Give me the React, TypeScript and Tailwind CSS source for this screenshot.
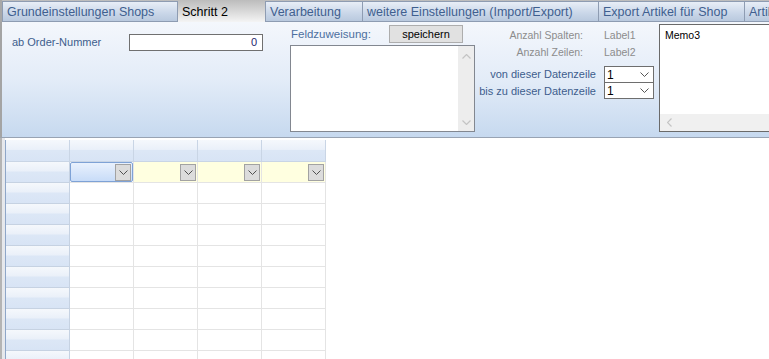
import React from "react";

const Chevron = ({ color = "#4a4a4a" }: { color?: string }) => (
  <svg width="9" height="5" viewBox="0 0 9 5" className="block">
    <polyline points="0.5,0.5 4.5,4.5 8.5,0.5" fill="none" stroke={color} strokeWidth="1" />
  </svg>
);

const ChevronUp = ({ color = "#c4c4c4" }: { color?: string }) => (
  <svg width="9" height="5" viewBox="0 0 9 5" className="block">
    <polyline points="0.5,4.5 4.5,0.5 8.5,4.5" fill="none" stroke={color} strokeWidth="1.2" />
  </svg>
);

const ChevronDown = ({ color = "#c4c4c4" }: { color?: string }) => (
  <svg width="9" height="5" viewBox="0 0 9 5" className="block">
    <polyline points="0.5,0.5 4.5,4.5 8.5,0.5" fill="none" stroke={color} strokeWidth="1.2" />
  </svg>
);

const ChevronLeft = ({ color = "#c4c4c4" }: { color?: string }) => (
  <svg width="5" height="9" viewBox="0 0 5 9" className="block">
    <polyline points="4.5,0.5 0.5,4.5 4.5,8.5" fill="none" stroke={color} strokeWidth="1.2" />
  </svg>
);

function Tab({ w, children, first }: { w: string; children: React.ReactNode; first?: boolean }) {
  return (
    <div
      className={`${w} mt-[1px] h-[21px] border-l border-t border-b border-[#8e9cb2] ${first ? "border-r" : ""} bg-[linear-gradient(#e8eef7,#c9d6e8_60%,#b9c9de)] text-[#3f5f8f] text-[12.5px] leading-none pl-[4px] pt-[4px] whitespace-nowrap overflow-hidden shrink-0`}
    >
      {children}
    </div>
  );
}

const DropBtn = () => (
  <div className="w-[16px] h-[17px] bg-[#dcdcdc] border border-[#a2a2a2] flex items-center justify-center">
    <Chevron color="#505050" />
  </div>
);

export default function App() {
  const rows = Array.from({ length: 9 });
  const hdrBg =
    "bg-[linear-gradient(#f5f8fc,#eaf0f9_45%,#dce7f6_50%,#d8e4f5)]";
  return (
    <div className="w-[769px] h-[359px] overflow-hidden bg-white font-['Liberation_Sans',Arial,sans-serif]">
      {/* Tabs */}
      <div className="flex h-[22px] bg-[linear-gradient(#bcbcbc,#f4f4f4)]">
        <div className="w-[2px] shrink-0 bg-[#a8a8a8]" />
        <Tab w="w-[176px]" first>
          Grundeinstellungen Shops
        </Tab>
        <div className="w-[87px] shrink-0 h-[22px] text-black text-[12.5px] leading-none pl-[4px] pt-[6px] whitespace-nowrap">
          Schritt 2
        </div>
        <Tab w="w-[97px]">Verarbeitung</Tab>
        <Tab w="w-[236px]">weitere Einstellungen (Import/Export)</Tab>
        <Tab w="w-[146px]">Export Artikel für Shop</Tab>
        <Tab w="w-[60px]">Artikel</Tab>
      </div>

      {/* Top panel */}
      <div className="flex items-start h-[116px] border-l-2 border-b border-l-[#a4a4a4] border-b-[#98a3b3] bg-[linear-gradient(#f4f7fc,#e3ecf8_50%,#c6d9ef)]">
        {/* Order-Nummer */}
        <div className="flex items-center ml-[10px] mt-[12px] shrink-0">
          <div className="w-[117px] text-[11px] text-[#3d5d8d] leading-none">ab Order-Nummer</div>
          <div className="w-[134px] h-[17px] bg-white border border-[#707070] text-right pr-[5px] text-[11px] leading-[15px] text-[#1e1e6e]">
            0
          </div>
        </div>

        {/* Feldzuweisung */}
        <div className="ml-[27px] mt-[3px] w-[185px] shrink-0">
          <div className="flex items-center h-[18px]">
            <div className="w-[99px] text-[11.5px] text-[#4d6fa0] leading-none pl-[1px] pt-[2px]">Feldzuweisung:</div>
            <div className="w-[74px] h-[18px] bg-[#e1e1e1] border border-[#adadad] text-[11px] text-black flex items-center justify-center leading-none">
              speichern
            </div>
          </div>
          <div className="mt-[2px] w-[185px] h-[87px] bg-white border border-[#828790] flex justify-end">
            <div className="w-[16px] h-full bg-[#ededed] flex flex-col items-center justify-between pt-[8px] pb-[6px]">
              <ChevronUp />
              <ChevronDown />
            </div>
          </div>
        </div>

        {/* Labels and combos */}
        <div className="w-[184px] shrink-0 mt-[7px]">
          <div className="flex items-center h-[13px]">
            <div className="w-[108px] text-right text-[10.5px] text-[#8c8c8c] leading-none">Anzahl Spalten:</div>
            <div className="ml-[21px] text-[10.5px] text-[#8c8c8c] leading-none">Label1</div>
          </div>
          <div className="flex items-center h-[13px] mt-[4px]">
            <div className="w-[108px] text-right text-[10.5px] text-[#8c8c8c] leading-none">Anzahl Zeilen:</div>
            <div className="ml-[21px] text-[10.5px] text-[#8c8c8c] leading-none">Label2</div>
          </div>
          <div className="flex items-center mt-[7px]">
            <div className="w-[121px] text-right text-[11px] text-[#3d5d8d] leading-none">von dieser Datenzeile</div>
            <div className="ml-[8px] w-[50px] h-[17px] bg-white border border-[#6e6e6e] flex items-center justify-between pl-[2px] pr-[4px] text-[12px] text-black leading-none">
              <span>1</span>
              <Chevron color="#555" />
            </div>
          </div>
          <div className="flex items-center">
            <div className="w-[121px] text-right text-[11px] text-[#3d5d8d] leading-none">bis zu dieser Datenzeile</div>
            <div className="ml-[8px] w-[50px] h-[16px] bg-white border border-t-0 border-[#6e6e6e] flex items-center justify-between pl-[2px] pr-[4px] text-[12px] text-black leading-none">
              <span>1</span>
              <Chevron color="#555" />
            </div>
          </div>
        </div>

        {/* Memo3 */}
        <div className="mt-[2px] flex-1 h-[108px] bg-white border-l border-t border-b border-[#6a6a6a] flex flex-col">
          <div className="flex-1 pl-[5px] pt-[5px] text-[10.5px] text-black leading-none">Memo3</div>
          <div className="h-[17px] bg-[#f0f0f0] flex items-center pl-[7px]">
            <ChevronLeft />
          </div>
        </div>
      </div>

      {/* Grid area */}
      <div className="flex h-[221px]">
        <div className="w-[5px] shrink-0 border-l-2 border-[#b4b4b4] bg-[#e6e8ec]" />
        <div className="pt-[2px] bg-white flex-1">
          <div className="border-l border-[#8ea6c8] w-[321px]">
            {/* header row */}
            <div className="flex h-[22px]">
              {[0, 1, 2, 3, 4].map((i) => (
                <div key={i} className={`w-[64px] h-[22px] border-r border-b border-[#c9d5e5] ${hdrBg}`} />
              ))}
            </div>
            {/* row 1 with combos */}
            <div className="flex h-[21px]">
              <div className={`w-[64px] h-[21px] border-r border-b border-[#c6d2e2] ${hdrBg}`} />
              <div className="w-[64px] h-[21px] border-r border-b border-[#e4e4e4] bg-white">
                <div className="w-[63px] h-[20px] rounded-[2px] border border-[#7ea2d6] bg-[linear-gradient(#e9f1fd,#c8dcf8)] flex justify-end items-center pr-[1px]">
                  <DropBtn />
                </div>
              </div>
              {[0, 1, 2].map((i) => (
                <div key={i} className="w-[64px] h-[21px] border-r border-b border-[#e4e4e4] bg-[#ffffe0] flex justify-end items-center pr-[1px]">
                  <DropBtn />
                </div>
              ))}
            </div>
            {rows.map((_, r) => (
              <div key={r} className="flex h-[21px]">
                <div className={`w-[64px] h-[21px] border-r border-b border-[#c6d2e2] ${hdrBg}`} />
                {[0, 1, 2, 3].map((i) => (
                  <div key={i} className="w-[64px] h-[21px] border-r border-b border-[#e4e4e4] bg-white" />
                ))}
              </div>
            ))}
          </div>
        </div>
      </div>
    </div>
  );
}
